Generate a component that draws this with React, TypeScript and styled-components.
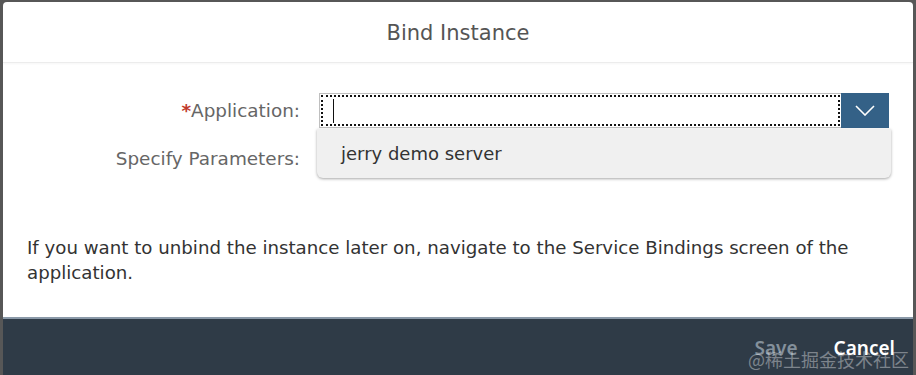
import styled, { createGlobalStyle } from "styled-components";

const Global = createGlobalStyle`
  html, body {
    margin: 0;
    padding: 0;
    background: #575757;
    font-family: "DejaVu Sans", "Noto Sans", Arial, sans-serif;
  }
`;

const Frame = styled.div`
  width: 916px;
  height: 375px;
  box-sizing: border-box;
  padding: 2px 3px 0 3px;
  overflow: hidden;
`;

const Dialog = styled.div`
  height: 100%;
  background: #ffffff;
  border-radius: 4px 4px 0 0;
  display: flex;
  flex-direction: column;
  overflow: hidden;
`;

const Header = styled.div`
  height: 58px;
  flex: none;
  display: flex;
  align-items: center;
  justify-content: center;
  padding-top: 2px;
  border-bottom: 1px solid #ececec;
  box-shadow: 0 1px 2px rgba(0, 0, 0, 0.04);

  h1 {
    margin: 0;
    font-size: 21px;
    font-weight: 400;
    color: #555555;
  }
`;

const Content = styled.div`
  flex: 1;
  padding: 30px 24px 0 24px;
  position: relative;
`;

const Form = styled.div`
  display: grid;
  grid-template-columns: 273px 1fr;
  column-gap: 19px;
  row-gap: 13px;
  align-items: center;
`;

const Label = styled.div`
  text-align: right;
  font-size: 18.4px;
  color: #666666;
  line-height: 35px;
  white-space: nowrap;
`;

const Required = styled.span`
  color: #c0392b;
  font-weight: 700;
`;

const Combo = styled.div`
  position: relative;
  display: flex;
  height: 35px;
`;

const Field = styled.div`
  flex: 1;
  border: 1px solid #bfbfbf;
  border-right: none;
  padding: 1px;
  background: #fff;

  div {
    height: 100%;
    box-sizing: border-box;
    border: 2px dotted #111;
    display: flex;
    align-items: center;
    padding-left: 10px;
  }
`;

const Caret = styled.span`
  width: 1px;
  height: 24px;
  background: #111;
`;

const Toggle = styled.div`
  width: 48px;
  background: #346187;
  display: flex;
  align-items: center;
  justify-content: center;
`;

const Popup = styled.div`
  position: absolute;
  top: 36px;
  left: -2px;
  right: -2px;
  height: 49px;
  box-sizing: border-box;
  background: #f0f0f0;
  border-radius: 0 0 6px 6px;
  box-shadow: 0 1px 3px rgba(0, 0, 0, 0.35);
  display: flex;
  align-items: center;
  padding-left: 24px;
  font-size: 18px;
  color: #333333;
  z-index: 2;
`;

const Spacer = styled.div`
  height: 35px;
`;

const Note = styled.p`
  margin: 59px 0 0 0;
  font-size: 18.2px;
  line-height: 25px;
  color: #333333;
`;

const Footer = styled.div`
  height: 58px;
  box-sizing: border-box;
  flex: none;
  background: #2f3b47;
  border-top: 2px solid #8a99a8;
  display: flex;
  align-items: center;
  justify-content: flex-end;
  gap: 36px;
  padding: 2px 18px 0 0;
  position: relative;
`;

const Action = styled.span<{ $disabled?: boolean }>`
  font-family: "Noto Sans", Arial, sans-serif;
  font-size: 19px;
  font-weight: 600;
  color: ${(p) => (p.$disabled ? "#84909b" : "#ffffff")};
`;

const Watermark = styled.span`
  position: absolute;
  right: 4px;
  bottom: 3px;
  font-size: 18px;
  color: rgba(255, 255, 255, 0.38);
  font-family: "Noto Sans CJK SC", "Noto Sans", sans-serif;
`;

export default function App() {
  return (
    <>
      <Global />
      <Frame>
        <Dialog>
          <Header>
            <h1>Bind Instance</h1>
          </Header>
          <Content>
            <Form>
              <Label>
                <Required>*</Required>Application:
              </Label>
              <Combo>
                <Field>
                  <div>
                    <Caret />
                  </div>
                </Field>
                <Toggle>
                  <svg width="20" height="11" viewBox="0 0 20 11">
                    <path d="M1 1 L10 10 L19 1" fill="none" stroke="#fff" strokeWidth="1.6" />
                  </svg>
                </Toggle>
                <Popup>jerry demo server</Popup>
              </Combo>
              <Label>Specify Parameters:</Label>
              <Spacer />
            </Form>
            <Note>
              If you want to unbind the instance later on, navigate to the Service Bindings screen of the
              application.
            </Note>
          </Content>
          <Footer>
            <Action $disabled>Save</Action>
            <Action>Cancel</Action>
            <Watermark>@稀土掘金技术社区</Watermark>
          </Footer>
        </Dialog>
      </Frame>
    </>
  );
}
